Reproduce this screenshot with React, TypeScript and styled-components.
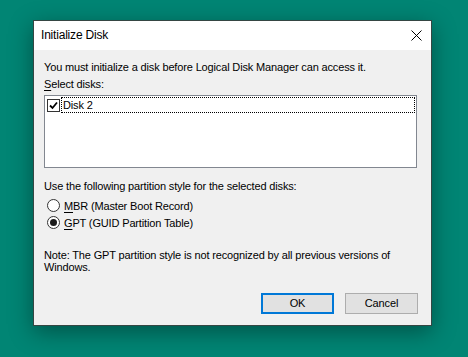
import React from 'react';
import styled, { createGlobalStyle } from 'styled-components';

const GlobalStyle = createGlobalStyle`
  html, body {
    margin: 0;
    padding: 0;
    background: #018574;
  }
  body {
    font-family: 'Liberation Sans', Arial, sans-serif;
    font-size: 11px;
    letter-spacing: -0.15px;
    color: #000;
  }
`;

const Desktop = styled.div`
  width: 468px;
  height: 357px;
  padding: 20px 0 0 33px;
  box-sizing: border-box;
  overflow: hidden;
`;

const Dialog = styled.div`
  width: 399px;
  height: 306px;
  box-sizing: border-box;
  border: 1px solid rgba(20, 40, 36, 0.85);
  background: #f0f0f0;
  box-shadow: 0 6px 22px rgba(0, 0, 0, 0.38);
  display: flex;
  flex-direction: column;
`;

const TitleBar = styled.div`
  height: 29px;
  background: #fff;
  display: flex;
  align-items: center;
  justify-content: space-between;
  padding: 0 9px 0 7px;
`;

const Title = styled.span`
  font-size: 12px;
  letter-spacing: -0.2px;
  line-height: 16px;
  margin-top: -1px;
`;

const CloseIcon = styled.svg`
  width: 11px;
  height: 11px;
  margin-top: -1px;
`;

const Body = styled.div`
  flex: 1;
  padding: 11px 13px 11px 10px;
  display: flex;
  flex-direction: column;
`;

const Text = styled.div<{ readonly $gap?: number }>`
  line-height: 13px;
  margin-top: ${({ $gap }) => $gap ?? 0}px;
  white-space: nowrap;
`;

const Para = styled.div<{ readonly $gap?: number }>`
  line-height: 12px;
  margin-top: ${({ $gap }) => $gap ?? 0}px;
  width: 372px;
`;

const Key = styled.span`
  text-decoration: underline;
  text-underline-offset: 2px;
`;

const ListBox = styled.div`
  margin-top: 4px;
  width: 373px;
  height: 73px;
  box-sizing: border-box;
  border: 1px solid #828790;
  background: #fff;
  padding: 1px 1px 0 1px;
`;

const ListRow = styled.div`
  display: flex;
  align-items: center;
  height: 16px;
  gap: 1px;
  padding-left: 1px;
`;

const CheckBox = styled.div`
  width: 13px;
  height: 13px;
  box-sizing: border-box;
  border: 1px solid #333;
  background: #fff;
  display: flex;
  align-items: center;
  justify-content: center;
  flex-shrink: 0;
`;

const FocusItem = styled.div`
  flex: 1;
  height: 16px;
  box-sizing: border-box;
  border: 1px dotted #000;
  padding-left: 1px;
  line-height: 14px;
`;

const RadioRow = styled.label`
  display: flex;
  align-items: center;
  gap: 4px;
  height: 17px;
  padding-left: 3px;
`;

const Radio = styled.span<{ readonly $checked?: boolean }>`
  width: 13px;
  height: 13px;
  box-sizing: border-box;
  border-radius: 50%;
  border: 1px solid #333;
  background: #fff;
  display: flex;
  align-items: center;
  justify-content: center;
  &::after {
    content: '';
    width: 7px;
    height: 7px;
    border-radius: 50%;
    background: #1a1a1a;
    display: ${({ $checked }) => ($checked ? 'block' : 'none')};
  }
`;

const Options = styled.div`
  margin-top: 4px;
  display: flex;
  flex-direction: column;
`;

const Footer = styled.div`
  margin-top: auto;
  display: flex;
  justify-content: flex-end;
  gap: 11px;
`;

const Button = styled.button<{ readonly $default?: boolean }>`
  width: 73px;
  height: 21px;
  box-sizing: border-box;
  background: #e1e1e1;
  border: ${({ $default }) => ($default ? '2px solid #0078d7' : '1px solid #adadad')};
  font-family: inherit;
  font-size: 11px;
  letter-spacing: inherit;
  color: #000;
  padding: 0;
  line-height: 1;
`;

export default function App() {
  return (
    <>
      <GlobalStyle />
      <Desktop>
        <Dialog>
          <TitleBar>
            <Title>Initialize Disk</Title>
            <CloseIcon viewBox="0 0 11 11">
              <path d="M0.5 0.5 L10.5 10.5 M10.5 0.5 L0.5 10.5" stroke="#000" strokeWidth="1" fill="none" />
            </CloseIcon>
          </TitleBar>
          <Body>
            <Text>You must initialize a disk before Logical Disk Manager can access it.</Text>
            <Text $gap={4}>
              <Key>S</Key>elect disks:
            </Text>
            <ListBox>
              <ListRow>
                <CheckBox>
                  <svg width="9" height="9" viewBox="0 0 9 9">
                    <path d="M1 4.5 L3.5 7 L8 1.5" stroke="#000" strokeWidth="1.8" fill="none" />
                  </svg>
                </CheckBox>
                <FocusItem>Disk 2</FocusItem>
              </ListRow>
            </ListBox>
            <Text $gap={12}>Use the following partition style for the selected disks:</Text>
            <Options>
              <RadioRow>
                <Radio />
                <span>
                  <Key>M</Key>BR (Master Boot Record)
                </span>
              </RadioRow>
              <RadioRow>
                <Radio $checked />
                <span>
                  <Key>G</Key>PT (GUID Partition Table)
                </span>
              </RadioRow>
            </Options>
            <Para $gap={18}>
              Note: The GPT partition style is not recognized by all previous versions of Windows.
            </Para>
            <Footer>
              <Button $default>OK</Button>
              <Button>Cancel</Button>
            </Footer>
          </Body>
        </Dialog>
      </Desktop>
    </>
  );
}
